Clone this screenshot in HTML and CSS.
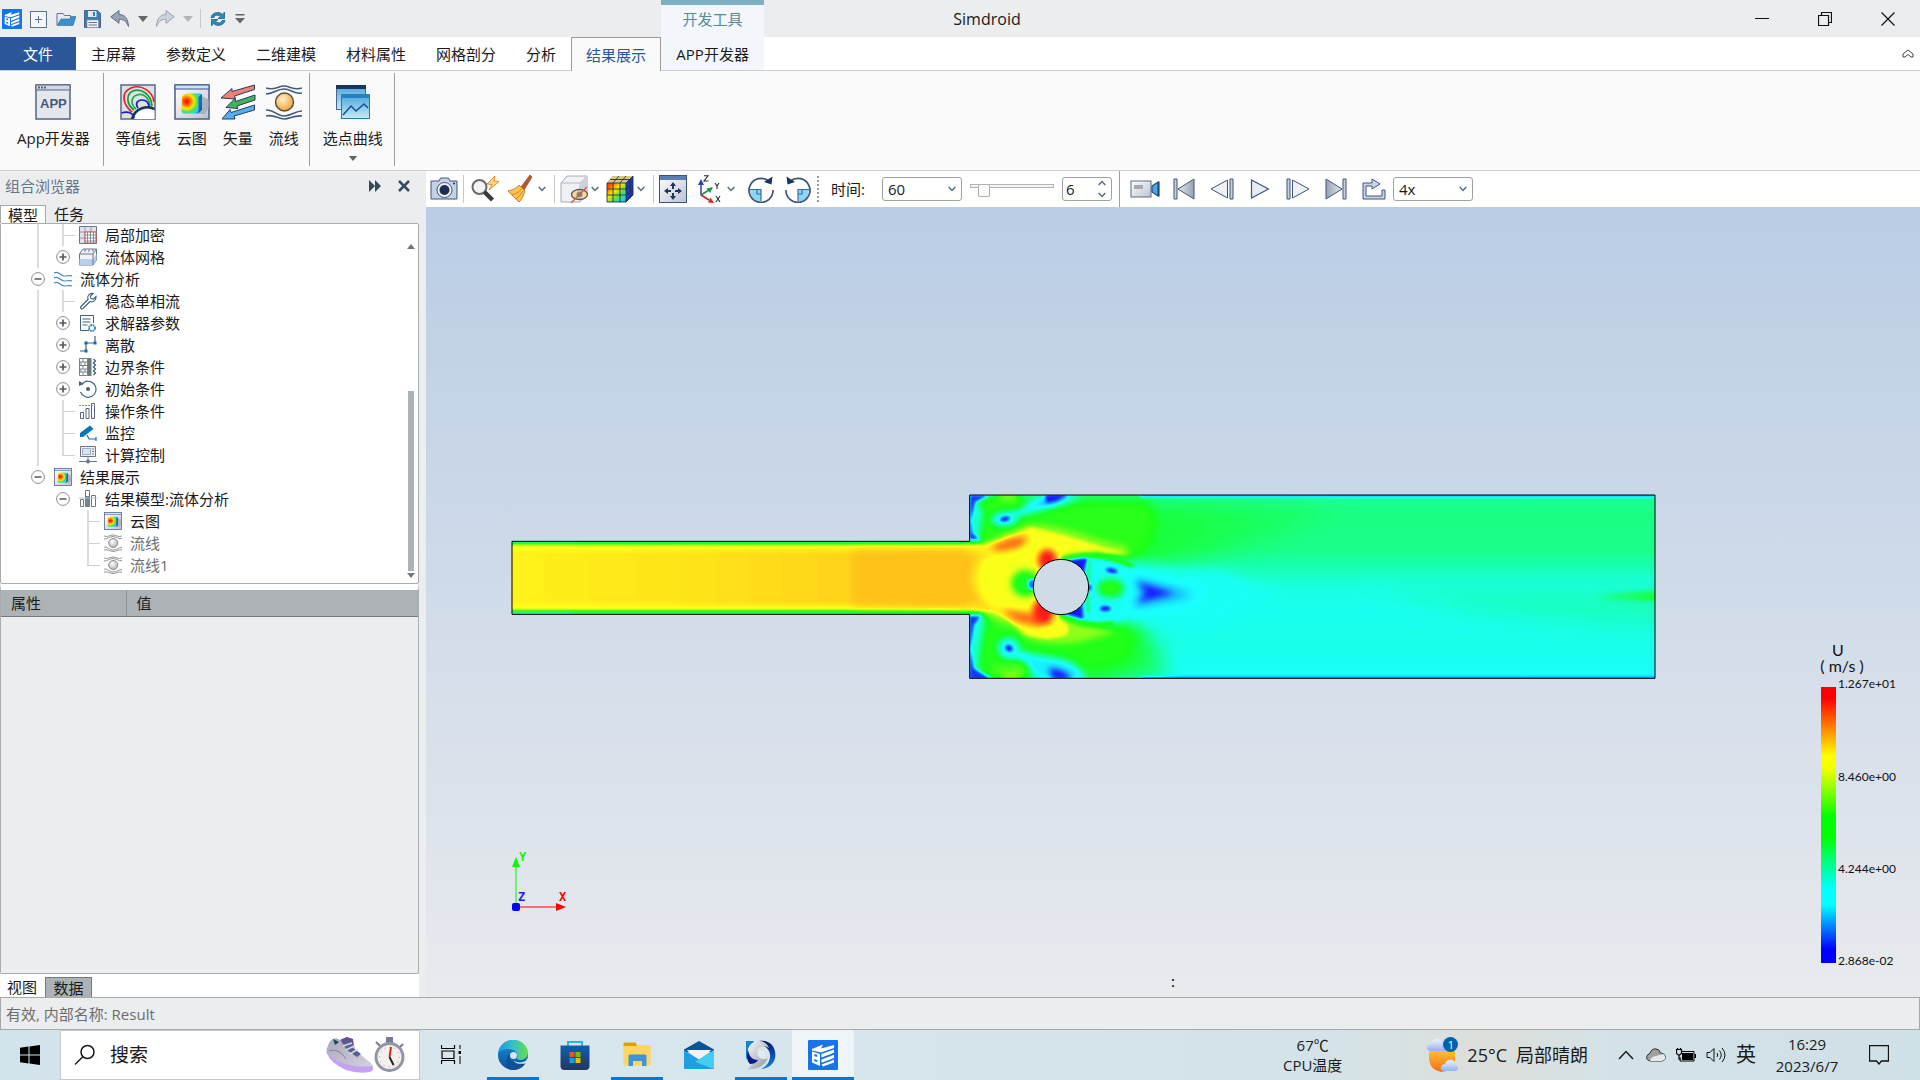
FILE: index.html
```html
<!DOCTYPE html>
<html lang="zh-CN">
<head>
<meta charset="utf-8">
<title>Simdroid</title>
<link rel="stylesheet" href="styles.css">
</head>
<body>
<svg class="sprite" aria-hidden="true">
  <defs>
    <linearGradient id="g-rainbow" x1="0" y1="0" x2="1" y2="1"><stop offset="0" stop-color="#f00000"/><stop offset=".25" stop-color="#ff5a00"/><stop offset=".42" stop-color="#ffe600"/><stop offset=".6" stop-color="#5ee04a"/><stop offset=".78" stop-color="#1fd0f0"/><stop offset="1" stop-color="#1230c8"/></linearGradient>
    <radialGradient id="g-heat" cx=".25" cy=".4" r=".85"><stop offset="0" stop-color="#e80000"/><stop offset=".2" stop-color="#ff5a00"/><stop offset=".42" stop-color="#ffe600"/><stop offset=".62" stop-color="#4be060"/><stop offset=".82" stop-color="#20d8f0"/><stop offset="1" stop-color="#1060e0"/></radialGradient>
    <linearGradient id="g-steel" x1="0" y1="0" x2="1" y2="1"><stop offset="0" stop-color="#fff"/><stop offset="1" stop-color="#bcc4d2"/></linearGradient>
    <linearGradient id="g-grey" x1="0" y1="0" x2="1" y2="0"><stop offset="0" stop-color="#e4e8ee"/><stop offset="1" stop-color="#98a2b2"/></linearGradient>
    <linearGradient id="g-sky" x1="0" y1="0" x2="0" y2="1"><stop offset="0" stop-color="#4ca4dc"/><stop offset="1" stop-color="#c2ecfc"/></linearGradient>
    <radialGradient id="g-ball" cx=".4" cy=".35" r=".7"><stop offset="0" stop-color="#fff0c8"/><stop offset="1" stop-color="#f0a030"/></radialGradient>
    <radialGradient id="g-ballgrey" cx=".4" cy=".35" r=".7"><stop offset="0" stop-color="#fff"/><stop offset="1" stop-color="#b0b0b0"/></radialGradient>
    <linearGradient id="g-edge" x1="0" y1="0" x2="1" y2="0"><stop offset="0" stop-color="#1a9be0"/><stop offset=".5" stop-color="#35c0c8"/><stop offset="1" stop-color="#66e048"/></linearGradient>
    <linearGradient id="g-edge2" x1="0" y1="0" x2="0" y2="1"><stop offset="0" stop-color="#1c8edc"/><stop offset="1" stop-color="#0c4f98"/></linearGradient>
    <linearGradient id="g-store" x1="0" y1="0" x2="0" y2="1"><stop offset="0" stop-color="#0f5fae"/><stop offset="1" stop-color="#23365e"/></linearGradient>
    <linearGradient id="g-swirl" x1="0" y1="0" x2="1" y2="1"><stop offset="0" stop-color="#fafcff"/><stop offset="1" stop-color="#8a929c"/></linearGradient>
    <linearGradient id="g-swirl2" x1="0" y1="0" x2="0" y2="1"><stop offset="0" stop-color="#08106a"/><stop offset="1" stop-color="#0c8ae8"/></linearGradient>
    <linearGradient id="g-shoe" x1="0" y1="0" x2="1" y2="1"><stop offset="0" stop-color="#a9a6bc"/><stop offset="1" stop-color="#d9d5e2"/></linearGradient>
    <linearGradient id="g-sun" x1="0" y1="0" x2="0" y2="1"><stop offset="0" stop-color="#ffc02e"/><stop offset="1" stop-color="#f26b1c"/></linearGradient>
    <linearGradient id="g-cloud" x1="0" y1="0" x2="0" y2="1"><stop offset="0" stop-color="#eef4ff"/><stop offset="1" stop-color="#8fb2ee"/></linearGradient>
  </defs>
  <symbol id="i-logo" viewBox="0 0 30 30"><rect width="30" height="30" rx="1" fill="#1673e8"/><path d="M4 9 15 4.500l-2 4 13-3.500v3l-13 4.500L4 10.500z" fill="#fff"/><path d="M4 11.500l8 2.500v12L4 22.500zM6.300 14v2.300l3 .8v-2.300zm0 5v2.300l3 .8v-2.200z" fill="#fff" fill-rule="evenodd"/><path d="M13.500 14 26 9.500v3.300L13.500 17.500zM13.500 19.500 26 14.800V18l-12.500 4.800zM13.500 24.500 26 19.800v2.700L15 26.500z" fill="#fff"/></symbol>
  <symbol id="i-new" viewBox="0 0 20 20"><rect x="1.500" y="2.500" width="16" height="16" fill="#f5f7fa" stroke="#60708f"/><path d="M9.500 7v7M6 10.500h7" stroke="#60708f"/></symbol>
  <symbol id="i-open" viewBox="0 0 20 20"><path d="M1 16V4.500h6l1.500 2h6V9" fill="#e7eaf0" stroke="#60708f"/><path d="M1 16.500 5 10h9l1.500-2.500H20l-3 9z" fill="#3b8fcc" stroke="#2e6a9d" stroke-width=".6"/></symbol>
  <symbol id="i-save" viewBox="0 0 20 20"><path d="M1.500 1.500h13l3 3v14h-16z" fill="#377fb8" stroke="#4a6284"/><path d="M5 2h8.500v6H5z" fill="#dfe8f2"/><path d="M10 3h2v4h-2z" fill="#377fb8"/><path d="M4 11h11.500v7.500H4z" fill="#f4f6f9" stroke="#7d8aa0" stroke-width=".6"/><path d="M5.500 13.500h8.500M5.500 16h8.500" stroke="#60708f"/></symbol>
  <symbol id="i-undo" viewBox="0 0 20 20"><path d="M.8 7.800 9 1.500v4c6 .2 9 4 9.500 12C16 11.500 13 10.300 9 10.300v4z" fill="#98a4b6" stroke="#5d6d88"/></symbol>
  <symbol id="i-redo" viewBox="0 0 20 20"><path d="M19.200 7.800 11 1.500v4c-6 .2-9 4-9.500 12C4 11.500 7 10.300 11 10.300v4z" fill="#cdd3da" stroke="#9ba3af"/></symbol>
  <symbol id="i-sync" viewBox="0 0 20 20"><path d="M3 8.500C4 3.500 11 2 14.500 5.500L16.500 3v6.500H10l2.500-2.200C9.500 5.500 6.500 6 6 8.500zM17 11.500c-1 5-8 6.500-11.500 3L3.500 17v-6.500H10l-2.500 2.200c3 1.800 6 1.300 6.500-1.200z" fill="#2c8cb4" stroke="#1f5f86" stroke-width=".8"/></symbol>
  <symbol id="i-caret" viewBox="0 0 10 6"><path d="M0 0h10L5 6z" fill="currentColor"/></symbol>
  <symbol id="i-custom" viewBox="0 0 10 10"><path d="M.5 0h9v1.500h-9zM0 4h10L5 9.500z" fill="currentColor"/></symbol>
  <symbol id="i-chev" viewBox="0 0 8 6"><path d="M.7 1 4 4.500 7.300 1" fill="none" stroke="#54707c" stroke-width="1.500"/></symbol>
  <symbol id="i-plus" viewBox="0 0 14 14"><circle cx="7" cy="7" r="6.400" fill="#fff" stroke="#8c8c94"/><path d="M7 3.500v7M3.500 7h7" stroke="#555a60" stroke-width="1.700"/></symbol>
  <symbol id="i-minus" viewBox="0 0 14 14"><circle cx="7" cy="7" r="6.400" fill="#fff" stroke="#8c8c94"/><path d="M3.500 7h7" stroke="#555a60" stroke-width="1.500"/></symbol>

  <symbol id="i-app" viewBox="0 0 36 36"><rect x="1" y="1" width="34" height="34" fill="#e4e8ee" stroke="#55637e" stroke-width="1.500"/><path d="M1 1h34v5H1z" fill="#d1d9e6" stroke="#55637e"/><path d="M3 3.500h8" stroke="#55637e" stroke-width="2" stroke-dasharray="2 1"/></symbol>
  <symbol id="i-contour" viewBox="0 0 36 36"><rect x="1" y="1" width="34" height="34" fill="#dde1e8" stroke="#586888" stroke-width="1.500"/><g fill="none" stroke-width="1.700"><path d="M12 28C2 20 1 8 11 4s22 3 23 14" stroke="#e82020"/><path d="M14 26C6 20 6 10 13 7s18 2 19 15" stroke="#1a9a3a"/><path d="M16 25c-6-5-5-12 1-14s13 2 13 13" stroke="#1fb045"/><path d="M18 24c-3-4-1-8 4-8s7 3 7 8M1.500 29c8-3 13 2 13 6" stroke="#1a20c8"/></g><path d="M14 35c3-9 13-12 20.500-8v8z" fill="#fff"/><path d="M12 35c3-11 15-14 22.500-10" fill="none" stroke="#1c2f55" stroke-width="2.500"/></symbol>
  <symbol id="i-cloudmap" viewBox="0 0 36 36"><rect x="1" y="1" width="34" height="34" fill="url(#g-steel)" stroke="#4a5c80" stroke-width="1.500"/><path d="M1 1h34v4H1z" fill="#cfe4f8" stroke="#3a5388"/><path d="M28 12v14l-3 4h6l4-7V16z" fill="#9aa4b6" opacity=".7"/><path d="M8 13q1-3 4-3.500h13q3 0 3 3v13l-4 4H10q-2.500 0-2.500-3z" fill="url(#g-heat)"/><path d="m24.500 13 3.500-3v16l-3.500 3.500z" fill="#1848a8" opacity=".75"/></symbol>
  <symbol id="i-vector" viewBox="0 0 36 36"><g stroke-linejoin="round"><path d="M1 14 12 4.500v3L34.500 1v4.500L14.500 12l1 3z" fill="#ee8078" stroke="#2b3c5e"/><path d="M6 23.500 15 14.500l.5 3L35 11v5l-18 6 1 2.500z" fill="#3fb458" stroke="#2b3c5e"/><path d="M2 35l8-9.500 1 3L34.500 21v5L14 32l1 3z" fill="#52b0f0" stroke="#2b3c5e"/></g></symbol>
  <symbol id="i-stream" viewBox="0 0 36 36"><g fill="none" stroke="#45597c" stroke-width="1.600"><path d="M0 4c8 3 12-2 18-2s10 5 18 2M0 10c7 0 11-5 18-5s11 6 18 4M0 26c7-1 11 6 18 6s11-5 18-5M0 32c8-2 12 3 18 3s10-4 18-3"/></g><circle cx="18.500" cy="18" r="9" fill="url(#g-ball)" stroke="#5a4a38" stroke-width="1.400"/></symbol>
  <symbol id="i-streamgrey" viewBox="0 0 36 36"><g fill="none" stroke="#969696" stroke-width="2"><path d="M0 4c8 3 12-2 18-2s10 5 18 2M0 10c7 0 11-5 18-5s11 6 18 4M0 26c7-1 11 6 18 6s11-5 18-5M0 32c8-2 12 3 18 3s10-4 18-3"/></g><circle cx="18.500" cy="18" r="9" fill="url(#g-ballgrey)" stroke="#888" stroke-width="2"/></symbol>
  <symbol id="i-curve" viewBox="0 0 36 36"><rect x="1.500" y="1.500" width="29" height="24" fill="url(#g-sky)" stroke="#47658c"/><path d="M1 1h30v4H1z" fill="#1c3460"/><rect x="6.500" y="10.500" width="28" height="24" fill="url(#g-sky)" stroke="#1f78b4"/><path d="M6 10h29v4H6z" fill="#2482c0"/><path d="m8 31 8-9 5 5 8-7 4 4" fill="none" stroke="#1c4c88" stroke-width="1.500"/></symbol>

  <symbol id="i-camera" viewBox="0 0 28 28"><path d="M1 6h8l1.500-3h8L20 6h7v18H1z" fill="#c3d2e6" stroke="#415577"/><circle cx="14.500" cy="15" r="7.500" fill="#eef3fa" stroke="#415577"/><circle cx="14.500" cy="15" r="5" fill="#1c2f52"/><circle cx="24" cy="8.500" r="1" fill="#1c2f52"/></symbol>
  <symbol id="i-magnify" viewBox="0 0 28 28"><circle cx="8.500" cy="12" r="7" fill="#f4f4f6" stroke="#6a6a6a" stroke-width="2"/><path d="m13.500 17 8 8" stroke="#3b3b3b" stroke-width="4.500"/><path d="M24 1 16 9l5 .5-3 5.500 10-8.500-5-.5z" fill="#ffd680" stroke="#e88a28"/></symbol>
  <symbol id="i-broom" viewBox="0 0 28 28"><path d="M23 0 14 12l3 3L25 2z" fill="#b8582a" stroke="#7d3515" stroke-width=".6"/><path d="M12 10c-3 4-7 5-11 6l11 11c3-2 4-6 6-11z" fill="#f8c44e" stroke="#cf7e28"/><path d="M14 14C12 18 8 19 5 19.500M16 16c-2 3-4 6-7.500 8" fill="none" stroke="#d88a28"/></symbol>
  <symbol id="i-hide" viewBox="0 0 28 28"><path d="M1 8 7 1h20v18l-7 8H1z" fill="#eff1f4" stroke="#a4abb4"/><path d="M1 8h19v19M20 8l7-7" fill="none" stroke="#b4bbc4"/><path d="M20 8l7-7v18l-7 8z" fill="#cfd4da"/><ellipse cx="19.500" cy="19.500" rx="8" ry="5" fill="#f7d894" stroke="#58526a" stroke-width="1.300"/><circle cx="19.500" cy="19.500" r="3" fill="#8a8a90"/><path d="M11 28 27 12" stroke="#c85838" stroke-width="1.200"/></symbol>
  <symbol id="i-cube" viewBox="0 0 28 28"><path d="M1 8 7 1h20v19l-7 7H1z" fill="url(#g-rainbow)"/><path d="M1 8 7 1h20l-7 7z" fill="#d8c884"/><path d="M20 8l7-7v19l-7 7z" fill="#1b38c0"/><path d="M1 8h19v19H1zM7 8v19M14 8v19M1 14h19l7-6M1 20h19l7-6M7 8l6-7M14 8l6-7M4 4.500h20v19M20 8l7-7v19l-7 7" fill="none" stroke="#27313c" stroke-width=".9"/></symbol>
  <symbol id="i-fit" viewBox="0 0 28 28"><rect x=".5" y=".5" width="27" height="27" fill="url(#g-steel)" stroke="#3c5276"/><path d="M1 1h26v4H1z" fill="#5a7fb4"/><path d="M14 7l3 4h-2v3h-2v-3h-2zM14 25l3-4h-2v-3h-2v3h-2zM5 16l4-3v2h3v2H9v2zM23 16l-4-3v2h-3v2h3v2z" fill="#1c3460"/></symbol>
  <symbol id="i-axes" viewBox="0 0 28 28"><path d="M5 20V9" stroke="#2448a8" stroke-width="1.500"/><path d="m5 4 3 6H2z" fill="#2448a8"/><path d="m5 20 8-5" stroke="#1f9248" stroke-width="1.500"/><path d="m17 12-3 6-3.500-4.500z" fill="#1f9248"/><path d="m5 20 8 5" stroke="#e82020" stroke-width="2"/><path d="m18 28-6-.5 2.500-5z" fill="#e82020"/><g fill="none" stroke="#2a2a2a" stroke-width="1.100"><path d="M8 .8h4L8 6h4.500M19 8l2 3 2-3M21 11v3M20 21l4 6M24 21l-4 6"/></g></symbol>
  <symbol id="i-rotate" viewBox="0 0 28 28"><path d="M3 15h11v11.500C8 26.500 3.500 22 3 15z" fill="#8cd6f8"/><path d="M14 26V14.500H3M10 15v4h4" fill="none" stroke="#3a6ea0" stroke-width="1.200"/><path d="M21.500 6A12 12 0 1 0 26 15" fill="none" stroke="#3e5474" stroke-width="1.700"/><path d="m25.500 1.500-1 8L17 7z" fill="#1c3460"/></symbol>
  <symbol id="i-video" viewBox="0 0 32 22"><rect x="1" y="3" width="20" height="16" fill="url(#g-steel)" stroke="#5c6c86"/><path d="M4 7h9v4H4z" fill="#a6a9ae"/><path d="M22 8l6-4v14l-6-4zM29 3.500v15" fill="#4aa8e0" stroke="#234a7c" stroke-width="1.200"/></symbol>
  <symbol id="i-first" viewBox="0 0 24 22"><path d="M2 1h3v20H2z" fill="#c8d0dc" stroke="#405478"/><path d="M22 1v20L6 11z" fill="url(#g-grey)" stroke="#405478"/></symbol>
  <symbol id="i-back" viewBox="0 0 24 22"><path d="M20 1h3v20h-3z" fill="#c8d0dc" stroke="#405478"/><path d="M17.500 2v18L1 11z" fill="#eef0f4" stroke="#405478"/></symbol>
  <symbol id="i-play" viewBox="0 0 24 22"><path d="M3.500 2v18L20.500 11z" fill="#e8ecf2" stroke="#405478" stroke-width="1.200"/></symbol>
  <symbol id="i-export" viewBox="0 0 24 22"><path d="M10 5V1l8 5-8 5V8H4v10h16v-6h3v9H1V5z" fill="#c9d5e6" stroke="#405478"/></symbol>

  <symbol id="t-refine" viewBox="0 0 18 18"><path d="M.5.500h17v17H.5z" fill="#dfe2ea" stroke="#6c7690"/><path d="M6 0v18M0 6h18M12 0v18M0 12h18" stroke="#8089a0" stroke-width=".8"/><path d="M6 6h11v11H6z" fill="#fff" stroke="#c85a40"/><path d="M8.500 6v11M11.500 6v11M14.500 6v11M6 9h11M6 12h11M6 15h11" stroke="#707890" stroke-width=".8"/></symbol>
  <symbol id="t-mesh" viewBox="0 0 18 18"><path d="M.5 6 4 1h13.500v11L14 17H.5z" fill="#f0f3f8" stroke="#6a7690"/><path d="M.5 11H14l3.500-5v6L14 17H.5z" fill="#b8d0f0"/><path d="M.5 6H14v11M14 6l3.500-5M6 4V1M10 4V1M14 4V1" fill="none" stroke="#6a7690"/></symbol>
  <symbol id="t-waves" viewBox="0 0 18 18"><path d="M0 3c5-3 6 3 10 3s5-1 8 0M0 8c5-3 6 3 10 3s5-1 8 0M0 13c5-3 6 3 10 3s5-1 8 0" fill="none" stroke="#4a8cb8" stroke-width="1.200"/></symbol>
  <symbol id="t-wrench" viewBox="0 0 18 18"><path d="M2 16.500c-1-1 0-2 0-2L9 7.500C8 4 10 1 14 1.500L11.500 4l.5 2.500 2.500.5L17 4.500c.5 4-3 6-6 5l-7 7c-1 .5-1.500.5-2 0z" fill="#fff" stroke="#3f6478" stroke-width="1.200"/></symbol>
  <symbol id="t-params" viewBox="0 0 18 18"><path d="M10 16.500H1.500v-15h13V9" fill="none" stroke="#3f6478"/><path d="M3.500 5h8M3.500 8h8M3.500 11h5" stroke="#3f6478"/><circle cx="13" cy="14" r="3" fill="#fff" stroke="#2a88c0" stroke-width="1.800" stroke-dasharray="1.800 .6"/></symbol>
  <symbol id="t-discrete" viewBox="0 0 18 18"><path d="M1 15h6V7h9V0" fill="none" stroke="#3f6478" stroke-width="1.200"/><path d="M5.500 13.500h3v3h-3zM5.500 5.500h3v3h-3zM14.500 5.500h3v3h-3z" fill="#0a6eb4"/></symbol>
  <symbol id="t-bound" viewBox="0 0 18 18"><path d="M.5.500h8v17h-8zM0 4h8M0 7.500h8M0 11h8M0 14h8M4 0v4M2 4v3.500M6 4v3.500M4 7.500V11M2 11v3M6 11v3M4 14v3" fill="none" stroke="#6c7880" stroke-width=".9"/><path d="M8.500 0h4v18h-4z" fill="#6c7880"/><path d="M14.500 1l2 2-2 2 2 2-2 2 2 2-2 2 2 2-2 2" fill="none" stroke="#3f6478" stroke-width="1.300"/></symbol>
  <symbol id="t-init" viewBox="0 0 18 18"><path d="M3 4a8 8 0 1 1-1.500 8M6 1.500A8 8 0 0 1 9 1" fill="none" stroke="#3f6478" stroke-width="1.200"/><path d="M0 6V1l5 3z" fill="#3f6478"/><circle cx="9" cy="9" r="2" fill="#3f6478"/></symbol>
  <symbol id="t-ops" viewBox="0 0 18 18"><path d="M1.500 10.500h3v6h-3zM7 6.500h3v10H7zM12.500 1.500h3v15h-3z" fill="#fff" stroke="#5a6482"/><path d="M0 3.500h16" stroke="#d8785c" stroke-dasharray="2 1"/></symbol>
  <symbol id="t-monitor" viewBox="0 0 18 18"><path d="M1 9 11 1.500 14.500 5 4 13H1z" fill="#0a74b8"/><path d="M8 11l2 4h7v2M17 13v4" fill="none" stroke="#0a74b8" stroke-width="1.200"/></symbol>
  <symbol id="t-calc" viewBox="0 0 18 18"><path d="M1.500.500h15v10h-15z" fill="#eef0f4" stroke="#6a7690"/><path d="M3.500 2.500h8v6h-8z" fill="#d5e6f8" stroke="#8a94a8" stroke-width=".7"/><path d="M13 3h2M13 5.500h2M13 8h2" stroke="#6a7690"/><path d="M9 11v4M0 15.500h18" stroke="#6a7690"/><circle cx="9" cy="15.500" r="2" fill="#6a7690"/></symbol>
  <symbol id="t-bars" viewBox="0 0 18 18"><path d="M1.500 9.500h3v7h-3zM12.500 5.500h4v11h-4z" fill="#fff" stroke="#6c7880"/><path d="M6.500.500h4v16h-4z" fill="#fff" stroke="#6c7880"/><path d="M6.500 6h4v10.500h-4z" fill="#77838c"/><path d="M0 8h18" stroke="#a8c8d8"/></symbol>

  <symbol id="k-win" viewBox="0 0 20 20"><path d="M0 2.800 8.500 1.600V9.600H0zM9.500 1.500 20 0v9.600H9.500zM0 10.500h8.500v8L0 17.300zM9.500 10.500H20V20L9.500 18.600z" fill="#000"/></symbol>
  <symbol id="k-search" viewBox="0 0 22 22"><circle cx="13.500" cy="8" r="6.500" fill="none" stroke="#1a1a1a" stroke-width="1.500"/><path d="M9 12.500 1 20.500" stroke="#1a1a1a" stroke-width="1.500"/></symbol>
  <symbol id="k-task" viewBox="0 0 20 20"><path d="M.5 0v3.500h13V0M.5 19v-3.500h13V19M1 6h12v7.500H1z" fill="none" stroke="#000" stroke-width="1.200"/><path d="M19 0v4M19 11v8" stroke="#000"/><path d="M17.500 6h3v3h-3z" fill="#000"/></symbol>
  <symbol id="k-edge" viewBox="0 0 30 30"><circle cx="15" cy="15" r="15" fill="url(#g-edge2)"/><path d="M.2 13.500C1 5 7.500 0 15 0c9 0 15 6.500 15 12.500 0 5-4 7.500-7.500 7.500-3 0-4-1-3.500-2.200 1.500-3-.5-7.300-5.500-8.300C7 8.300 2 10 .2 13.500z" fill="url(#g-edge)"/><path d="M12 14c-1 7 4 12 11 10 2-.5 3.500-1.500 5-2C25 28 19 31 13 29.700 7 27 7 18 12 14z" fill="#124f96"/><path d="M30 18v5c-4 1-12 2-14.500-2.500 3 2.500 9 2.500 12 .5z" fill="#d6e5ec"/><circle cx="15.500" cy="15.500" r="3.500" fill="#d6e5ec"/></symbol>
  <symbol id="k-store" viewBox="0 0 30 30"><path d="M8 6V2h14v4" fill="none" stroke="#2cb2f0" stroke-width="2"/><path d="M.5 5.500h29V26q0 4-4 4h-21q-4 0-4-4z" fill="url(#g-store)"/><path d="M9.500 12h5v5h-5z" fill="#f25022"/><path d="M15.500 12h5v5h-5z" fill="#7fba00"/><path d="M9.500 18h5v5h-5z" fill="#00a4ef"/><path d="M15.500 18h5v5h-5z" fill="#ffb900"/></symbol>
  <symbol id="k-folder" viewBox="0 0 30 30"><path d="M1.500 3.500q0-1 1-1h11l2 4h-14z" fill="#dfa000"/><path d="M1.500 6h13l2-1h12v20.500h-27z" fill="#ffd461"/><path d="M6.500 26V16q0-1.500 1.500-1.500h15q1.500 0 1.500 1.500v10H20v-5h-9v5z" fill="#3c94d8"/></symbol>
  <symbol id="k-mail" viewBox="0 0 30 30"><path d="M0 9.500 15 1l15 8.500V12H0z" fill="#0c529a"/><path d="M3 10h24L15 22z" fill="#f2f2f2"/><path d="M0 10l15 9.500L30 10v19H0z" fill="#1e9fe0"/><path d="M30 10 11 22l19 7z" fill="#42cdf4"/><path d="M3 10h24L15 19z" fill="#f2f2f2"/></symbol>
  <symbol id="k-swirl" viewBox="0 0 30 30"><path d="M0 1h8L3 12 0 20z" fill="#1182d8"/><path d="M13 1c12-2 18 8 16 17-1 6-7 11-14 11 8-4 11-12 8-18-2-4-6-6-10-5z" fill="url(#g-swirl2)"/><path d="M2 9C4 3 9 1 13 1c5 0 9 3 10 7-5-3-11-1-12 4 0 6 6 9 11 6-4 9-12 12-21 11 6-3 6-8 4-11C4 15 1 13 2 9z" fill="url(#g-swirl)"/><path d="M2 10c1 7 5 10 10 10-2 3-5 4-8 4-3-3-4-8-2-14z" fill="#0a1a88"/><circle cx="15.500" cy="14" r="3.500" fill="#e4ebf0"/></symbol>
  <symbol id="k-shoe" viewBox="0 0 48 36"><path d="M4 4Q9-1 14 3l6-3 6 2 4 12 16 13q3 5-2 7-20 3-33-8L1 17q-2-3 3-13z" fill="url(#g-shoe)"/><path d="M1 16q15 16 45 13 3 4-2 6-12 2-24-2Q4 26 1 16z" fill="#c6a0f4"/><path d="M14 3l7-3 6 2 1 8z" fill="#6c4a9c"/><path d="M15 4l6 9 10 7 4-3-8-6-3-8z" fill="#55608c"/><path d="m17 9 9-3M20 13l8-4M24 17l8-5" stroke="#d8d8e8" stroke-width="1.500"/><path d="M7 2l6 3-4 3z" fill="#1c4a54"/><path d="M3 14c6-2 12 0 17 8" fill="none" stroke="#85829c"/></symbol>
  <symbol id="k-watch" viewBox="0 0 32 36"><path d="M13 1h5v5h-5zM2 5l4 4M29 7l-4 4" fill="#777a90" stroke="#777a90" stroke-width="2"/><circle cx="15.500" cy="20" r="15" fill="#9294a8"/><circle cx="15.500" cy="20" r="12" fill="#f3f0ee"/><circle cx="15.500" cy="20" r="10" fill="none" stroke="#999" stroke-dasharray="1 4.200"/><path d="M15.500 20 17 10" stroke="#e02a20" stroke-width="2"/><path d="m15.500 20 4 8" stroke="#222" stroke-width="2"/></symbol>
  <symbol id="k-weather" viewBox="0 0 32 36"><path d="M3 14h26v10Q25 35 15 35 4 33 3 22z" fill="url(#g-sun)"/><path d="M4 14q-4-1-3-4.500Q2 7 5 7q1-5 6-5 4 0 6 5 4 0 4 4t-4 3z" fill="url(#g-cloud)"/><path d="M17 34q-3-1-2-4 1-3 4-3 2-5 7-4 4 2 4 5 3 1 2 4-1 2-3 2z" fill="url(#g-cloud)"/></symbol>
  <symbol id="k-up" viewBox="0 0 16 10"><path d="m1 9 7-7.500L15 9" fill="none" stroke="#1a1a1a" stroke-width="1.500"/></symbol>
  <symbol id="k-cloud" viewBox="0 0 20 14"><path d="M5 13Q0 12.500.7 8.500 1.500 6 4 5.500 5 1 9.500.800q4 .2 5 4.200Q19 5.500 19.300 9q0 4-4.300 4z" fill="#a0a0a0" stroke="#2c2c2c"/><path d="M4 13q1-4.500 6-5L17 6q3 2 2 5-1.500 2-4 2z" fill="#e8e8e8"/></symbol>
  <symbol id="k-batt" viewBox="0 0 20 14"><path d="M5 3.500h13v9.500H4V9" fill="none" stroke="#000"/><path d="M6 5h11v7H6zM18.500 6h1.500v4h-1.500z" fill="#000"/><path d="M.5 1.500h5v4l-2.500 2-2.500-2zM1.500 0v2M4.500 0v2M3 7v4h2" fill="none" stroke="#000" stroke-width="1.200"/></symbol>
  <symbol id="k-vol" viewBox="0 0 20 18"><path d="M1 6.500h3l4-4v13l-4-4H1z" fill="none" stroke="#111"/><path d="M11 7q1.500 2 0 4M13.500 4.500q3.500 4.500 0 9M16 2q6 7 0 14" fill="none" stroke="#111"/></symbol>
  <symbol id="k-note" viewBox="0 0 20 20"><path d="M.5.500h19v15.500h-7l-2.500 3-2.500-3h-7z" fill="none" stroke="#111" stroke-width="1.300"/></symbol>
</svg>

<header class="titlebar">
  <div class="quick">
    <svg class="i20" aria-hidden="true"><use href="#i-logo"/></svg>
    <button class="qbtn" aria-label="新建"><svg class="i20"><use href="#i-new"/></svg></button>
    <button class="qbtn" aria-label="打开"><svg class="i20"><use href="#i-open"/></svg></button>
    <button class="qbtn" aria-label="保存"><svg class="i20"><use href="#i-save"/></svg></button>
    <button class="qbtn" aria-label="撤销"><svg class="i20"><use href="#i-undo"/></svg><svg class="caret"><use href="#i-caret"/></svg></button>
    <button class="qbtn dim" aria-label="重做"><svg class="i20"><use href="#i-redo"/></svg><svg class="caret"><use href="#i-caret"/></svg></button>
    <span class="qsep"></span>
    <button class="qbtn" aria-label="刷新"><svg class="i20"><use href="#i-sync"/></svg></button>
    <button class="qbtn" aria-label="自定义"><svg class="i10"><use href="#i-custom"/></svg></button>
  </div>
  <div class="context-head">开发工具</div>
  <h1 class="app-title">Simdroid</h1>
  <div class="winbtns">
    <button aria-label="最小化"><svg viewBox="0 0 14 14"><path d="M0 6.500h14" stroke="#111"/></svg></button>
    <button aria-label="还原"><svg viewBox="0 0 14 14"><path d="M.5 3.500h10v10H.5zM3.500 3V.500h10v10H11" fill="none" stroke="#111" stroke-width="1.200"/></svg></button>
    <button aria-label="关闭"><svg viewBox="0 0 14 14"><path d="m.5.500 13 13M13.500.500l-13 13" stroke="#111" stroke-width="1.200"/></svg></button>
  </div>
</header>

<nav class="menu">
  <button class="file">文件</button>
  <button>主屏幕</button>
  <button>参数定义</button>
  <button>二维建模</button>
  <button>材料属性</button>
  <button>网格剖分</button>
  <button>分析</button>
  <button class="current">结果展示</button>
  <button class="context">APP开发器</button>
  <button class="collapse" aria-label="折叠功能区"><svg viewBox="0 0 12 12"><path d="M1 6l5-4 5 4v3H9L6 6.500 3 9H1z" fill="#fff" stroke="#444"/></svg></button>
</nav>

<section class="ribbon">
  <div class="rgroup rgroup-app">
    <button class="rbtn"><span class="app-icon"><svg class="i36"><use href="#i-app"/></svg><b>APP</b></span><span>App开发器</span></button>
  </div>
  <div class="rgroup rgroup-plots">
    <button class="rbtn"><svg class="i36"><use href="#i-contour"/></svg><span>等值线</span></button>
    <button class="rbtn"><svg class="i36"><use href="#i-cloudmap"/></svg><span>云图</span></button>
    <button class="rbtn"><svg class="i36"><use href="#i-vector"/></svg><span>矢量</span></button>
    <button class="rbtn"><svg class="i36"><use href="#i-stream"/></svg><span>流线</span></button>
  </div>
  <div class="rgroup rgroup-curve">
    <button class="rbtn"><svg class="i36"><use href="#i-curve"/></svg><span>选点曲线</span><svg class="drop"><use href="#i-caret"/></svg></button>
  </div>
</section>

<main class="work">
  <aside class="browser">
    <div class="dock-head">
      <span>组合浏览器</span>
      <button aria-label="自动隐藏"><svg viewBox="0 0 14 12"><path d="M1 0l6 6-6 6zM7 0l6 6-6 6z" fill="#34495e"/></svg></button>
      <button aria-label="关闭"><svg viewBox="0 0 14 12"><path d="M2 1l10 10M12 1 2 11" stroke="#34495e" stroke-width="2.500"/></svg></button>
    </div>
    <div class="dock-tabs"><button class="on">模型</button><button>任务</button></div>
    <div class="tree-box">
      <ul class="tree">
        <li><i class="c v"></i><i class="c t"></i><i class="c"><svg class="i18"><use href="#t-refine"/></svg></i><span>局部加密</span></li>
        <li><i class="c v"></i><button class="c" aria-label="展开"><svg class="i14"><use href="#i-plus"/></svg></button><i class="c"><svg class="i18"><use href="#t-mesh"/></svg></i><span>流体网格</span></li>
        <li><button class="c" aria-label="折叠"><svg class="i14"><use href="#i-minus"/></svg></button><i class="c"><svg class="i18"><use href="#t-waves"/></svg></i><span>流体分析</span></li>
        <li><i class="c v"></i><i class="c t"></i><i class="c"><svg class="i18"><use href="#t-wrench"/></svg></i><span>稳态单相流</span></li>
        <li><i class="c v"></i><button class="c" aria-label="展开"><svg class="i14"><use href="#i-plus"/></svg></button><i class="c"><svg class="i18"><use href="#t-params"/></svg></i><span>求解器参数</span></li>
        <li><i class="c v"></i><button class="c" aria-label="展开"><svg class="i14"><use href="#i-plus"/></svg></button><i class="c"><svg class="i18"><use href="#t-discrete"/></svg></i><span>离散</span></li>
        <li><i class="c v"></i><button class="c" aria-label="展开"><svg class="i14"><use href="#i-plus"/></svg></button><i class="c"><svg class="i18"><use href="#t-bound"/></svg></i><span>边界条件</span></li>
        <li><i class="c v"></i><button class="c" aria-label="展开"><svg class="i14"><use href="#i-plus"/></svg></button><i class="c"><svg class="i18"><use href="#t-init"/></svg></i><span>初始条件</span></li>
        <li><i class="c v"></i><i class="c t"></i><i class="c"><svg class="i18"><use href="#t-ops"/></svg></i><span>操作条件</span></li>
        <li><i class="c v"></i><i class="c t"></i><i class="c"><svg class="i18"><use href="#t-monitor"/></svg></i><span>监控</span></li>
        <li><i class="c v"></i><i class="c l"></i><i class="c"><svg class="i18"><use href="#t-calc"/></svg></i><span>计算控制</span></li>
        <li><button class="c" aria-label="折叠"><svg class="i14"><use href="#i-minus"/></svg></button><i class="c"><svg class="i18"><use href="#i-cloudmap"/></svg></i><span>结果展示</span></li>
        <li><i class="c"></i><button class="c" aria-label="折叠"><svg class="i14"><use href="#i-minus"/></svg></button><i class="c"><svg class="i18"><use href="#t-bars"/></svg></i><span>结果模型:流体分析</span></li>
        <li><i class="c"></i><i class="c"></i><i class="c t"></i><i class="c"><svg class="i18"><use href="#i-cloudmap"/></svg></i><span>云图</span></li>
        <li class="off"><i class="c"></i><i class="c"></i><i class="c t"></i><i class="c"><svg class="i18"><use href="#i-streamgrey"/></svg></i><span>流线</span></li>
        <li class="off"><i class="c"></i><i class="c"></i><i class="c l"></i><i class="c"><svg class="i18"><use href="#i-streamgrey"/></svg></i><span>流线1</span></li>
      </ul>
      <div class="scroll">
        <svg class="up"><use href="#i-caret"/></svg>
        <div class="thumb"></div>
        <svg><use href="#i-caret"/></svg>
      </div>
    </div>
    <div class="props">
      <table>
        <thead><tr><th scope="col" class="key">属性</th><th scope="col">值</th></tr></thead>
        <tbody></tbody>
      </table>
    </div>
    <div class="prop-tabs"><button>视图</button><button class="on">数据</button></div>
  </aside>

  <section class="view">
    <div class="toolbar">
      <div class="tgroup"><button class="tbtn" aria-label="截图"><svg class="i28"><use href="#i-camera"/></svg></button></div>
      <span class="tsep"></span>
      <div class="tgroup first">
        <button class="tbtn" aria-label="缩放"><svg class="i28"><use href="#i-magnify"/></svg></button>
        <button class="tbtn" aria-label="清除"><svg class="i28"><use href="#i-broom"/></svg><svg class="chev"><use href="#i-chev"/></svg></button>
      </div>
      <span class="tsep"></span>
      <div class="tgroup tight">
        <button class="tbtn" aria-label="隐藏"><svg class="i28"><use href="#i-hide"/></svg><svg class="chev"><use href="#i-chev"/></svg></button>
        <button class="tbtn" aria-label="显示模式"><svg class="i28"><use href="#i-cube"/></svg><svg class="chev"><use href="#i-chev"/></svg></button>
      </div>
      <span class="tsep"></span>
      <div class="tgroup">
        <button class="tbtn" aria-label="适应窗口"><svg class="i28"><use href="#i-fit"/></svg></button>
        <button class="tbtn" aria-label="视角"><svg class="i28"><use href="#i-axes"/></svg><svg class="chev"><use href="#i-chev"/></svg></button>
        <button class="tbtn" aria-label="顺时针旋转"><svg class="i28"><use href="#i-rotate"/></svg></button>
        <button class="tbtn flip" aria-label="逆时针旋转"><svg class="i28"><use href="#i-rotate"/></svg></button>
      </div>
      <span class="grip"></span>
      <div class="time">
        <label for="time">时间:</label>
        <span class="combo"><select id="time"><option>60</option></select><svg class="chev"><use href="#i-chev"/></svg></span>
        <input class="slider" type="range" min="0" max="60" value="6" aria-label="时间进度">
        <span class="spin"><input type="text" value="6" aria-label="时间步"><span class="arrows"><svg class="chev flipv"><use href="#i-chev"/></svg><svg class="chev"><use href="#i-chev"/></svg></span></span>
      </div>
      <span class="tsep full"></span>
      <div class="player">
        <button aria-label="录制"><svg class="vid"><use href="#i-video"/></svg></button>
        <button aria-label="第一帧"><svg><use href="#i-first"/></svg></button>
        <button aria-label="上一帧"><svg><use href="#i-back"/></svg></button>
        <button aria-label="播放"><svg><use href="#i-play"/></svg></button>
        <button class="flip" aria-label="下一帧"><svg><use href="#i-back"/></svg></button>
        <button class="flip" aria-label="最后一帧"><svg><use href="#i-first"/></svg></button>
        <button aria-label="导出"><svg><use href="#i-export"/></svg></button>
        <span class="combo"><select aria-label="播放速度"><option>4x</option></select><svg class="chev"><use href="#i-chev"/></svg></span>
      </div>
    </div>

    <div class="scene">
      <svg class="plot" viewBox="426 207 1494 790" preserveAspectRatio="xMidYMid meet" role="img" aria-label="速度云图">
        <defs>
          <filter id="cmap" x="-2%" y="-5%" width="104%" height="110%" color-interpolation-filters="sRGB">
            <feComponentTransfer>
              <feFuncR type="table" tableValues=".1 .1 .1 1 1"/>
              <feFuncG type="table" tableValues=".1 1 1 1 .1"/>
              <feFuncB type="table" tableValues="1 1 .1 .1 .1"/>
            </feComponentTransfer>
          </filter>
          <filter id="b3" x="-50%" y="-50%" width="200%" height="200%" color-interpolation-filters="sRGB"><feGaussianBlur stdDeviation="4"/></filter>
          <filter id="b8" x="-50%" y="-50%" width="200%" height="200%" color-interpolation-filters="sRGB"><feGaussianBlur stdDeviation="9"/></filter>
          <filter id="b15" x="-50%" y="-50%" width="200%" height="200%" color-interpolation-filters="sRGB"><feGaussianBlur stdDeviation="16"/></filter>
          <filter id="b30" x="-50%" y="-50%" width="200%" height="200%" color-interpolation-filters="sRGB"><feGaussianBlur stdDeviation="32"/></filter>
          <linearGradient id="inlet" x1="0" x2="1" y1="0" y2="0"><stop offset="0" stop-color="#c2c2c2"/><stop offset=".45" stop-color="#c7c7c7"/><stop offset="1" stop-color="#cfcfcf"/></linearGradient>
          <linearGradient id="outlet" x1="0" x2="0" y1="0" y2="1"><stop offset="0" stop-color="#5a5a5a"/><stop offset=".1" stop-color="#626262"/><stop offset=".3" stop-color="#606060"/><stop offset=".5" stop-color="#484848"/><stop offset=".62" stop-color="#444"/><stop offset=".8" stop-color="#464646"/><stop offset="1" stop-color="#404040"/></linearGradient>
          <linearGradient id="lobe" gradientUnits="userSpaceOnUse" x1="560" x2="1300" y1="0" y2="0"><stop offset="0" stop-color="#808080"/><stop offset="1" stop-color="#808080" stop-opacity="0"/></linearGradient>
          <linearGradient id="legend" x1="0" x2="0" y1="0" y2="1"><stop offset="0" stop-color="#f00"/><stop offset=".04" stop-color="#f00"/><stop offset=".25" stop-color="#ff0"/><stop offset=".3" stop-color="#f0ff00"/><stop offset=".47" stop-color="#0f0"/><stop offset=".54" stop-color="#0f0"/><stop offset=".73" stop-color="#0ff"/><stop offset=".79" stop-color="#0ff"/><stop offset=".95" stop-color="#00f"/><stop offset="1" stop-color="#00f"/></linearGradient>
          <clipPath id="domain"><path d="M-1284 184H89V45H2145V595H89V403H-1284z"/></clipPath>
        </defs>
        <svg x="940" y="480" width="360" height="210" viewBox="0 0 1080 630" overflow="visible">
          <g clip-path="url(#domain)">
            <g filter="url(#cmap)">
              <rect x="-1290" y="30" width="3450" height="580" fill="#444"/>
              <rect x="89" y="45" width="2060" height="550" fill="url(#outlet)"/>
              <path d="M1300 330H2200V440Q1700 430 1300 330z" fill="#525252" filter="url(#b30)"/>
              <path d="M1960 352 2200 330V365z" fill="#7c7c7c" filter="url(#b8)"/>
              <path d="M90 70H1300Q1000 190 680 250H500V400Q660 430 680 600H90z" fill="url(#lobe)" opacity=".8" filter="url(#b30)"/>
              <path d="M90 60H620Q680 130 610 220 590 245 540 255L400 220 90 190z" fill="#848484" filter="url(#b15)"/>
              <path d="M90 410 420 440 550 420Q620 470 570 540L480 590H90z" fill="#828282" filter="url(#b30)"/>
              <path d="M120 440 420 440 550 425Q600 470 560 520L480 550H130z" fill="#828282" filter="url(#b15)"/>
              <path d="M90 50H135L115 190H90zM90 405H135L105 600H90z" fill="#484848" filter="url(#b8)"/>
              <path d="M150 120Q240 90 290 50H430Q330 90 250 105L180 130z" fill="#3c3c3c" filter="url(#b8)"/>
              <path d="M190 490Q240 520 330 530T440 600H290L250 545 190 525z" fill="#3c3c3c" filter="url(#b8)"/>
              <ellipse cx="180" cy="72" rx="70" ry="18" fill="#848484" filter="url(#b8)"/>
              <ellipse cx="205" cy="50" rx="36" ry="10" fill="#a4a4a4" filter="url(#b8)"/>
              <ellipse cx="205" cy="572" rx="60" ry="26" fill="#8c8c8c" filter="url(#b8)"/>
              <ellipse cx="215" cy="590" rx="30" ry="14" fill="#a0a0a0" filter="url(#b8)"/>
              <ellipse cx="195" cy="117" rx="38" ry="20" fill="#404040" filter="url(#b8)"/>
              <ellipse cx="206" cy="503" rx="32" ry="30" fill="#404040" filter="url(#b8)"/>
              <path d="M90 45H150L106 66 94 120 98 160 126 186H88zM88 400H130L102 435 92 510 102 565 160 600H88z" fill="#080808" filter="url(#b3)"/>
              <ellipse cx="195" cy="117" rx="14" ry="7" transform="rotate(-12 195 117)" filter="url(#b3)"/>
              <ellipse cx="207" cy="505" rx="11" ry="9" transform="rotate(30 207 505)" filter="url(#b3)"/>
              <path d="M300 70Q330 45 400 40L350 62z" filter="url(#b8)"/>
              <path d="M315 45h70l-40 18-25 5z" filter="url(#b3)"/>
              <path d="M325 566Q365 560 400 600H340z" filter="url(#b8)"/>
              <path d="M345 575l45 20h-40z" filter="url(#b8)"/>
              <path d="M440 215Q620 270 860 275L1000 350 800 440Q560 410 440 430z" fill="#424242" filter="url(#b15)"/>
              <path d="M-1290 190H130Q200 165 260 135 330 130 420 160T560 200L570 235 380 235 350 320 360 400Q470 440 530 455L420 485Q330 500 250 470 220 440 200 410L130 392H-1290z" fill="#a0a0a0" filter="url(#b8)"/>
              <path d="M-1290 194H130Q200 180 270 140 340 155 420 180T555 218L380 232 350 320 360 410Q400 440 380 465 310 490 250 460 220 425 160 396L100 390H-1290z" fill="#bebebe" filter="url(#b3)"/>
              <rect x="-1400" y="208" width="1480" height="168" fill="url(#inlet)" filter="url(#b8)"/>
              <path d="M-260 212H140L200 180 270 160 240 200 130 225Q70 300 140 375L230 430H200L110 382-260 376z" fill="#d0d0d0" filter="url(#b15)"/>
              <path d="M150 205Q210 170 265 172L240 198 180 212z" fill="#ececec" filter="url(#b8)"/>
              <path d="M180 385Q250 400 310 400L340 425 290 440 230 425z" fill="#e8e8e8" filter="url(#b8)"/>
              <ellipse cx="322" cy="240" rx="28" ry="32" fill="#fff" filter="url(#b8)"/>
              <ellipse cx="310" cy="392" rx="32" ry="36" fill="#fff" filter="url(#b8)"/>
              <ellipse cx="185" cy="305" rx="34" ry="66" fill="#bebebe" filter="url(#b15)"/>
              <ellipse cx="256" cy="310" rx="42" ry="40" fill="#7c7c7c" filter="url(#b8)"/>
              <ellipse cx="277" cy="313" rx="14" ry="16" fill="#181818" filter="url(#b3)"/>
              <path d="M395 238 470 222 560 242 600 280 590 400 500 435 420 425 370 405 420 320z" fill="#424242" filter="url(#b8)"/>
              <path d="M365 236Q450 205 580 258" fill="none" stroke="#848484" stroke-width="14" filter="url(#b3)"/>
              <path d="M360 406Q430 445 520 430" fill="none" stroke="#848484" stroke-width="14" filter="url(#b3)"/>
              <path d="M450 240Q440 320 445 400" fill="none" stroke="#5c5c5c" stroke-width="14" filter="url(#b3)"/>
              <ellipse cx="512" cy="325" rx="40" ry="28" fill="#848484" filter="url(#b8)"/>
              <path d="M365 242 442 233 428 290zM360 398 426 372 430 418z" fill="#000" filter="url(#b3)"/>
              <ellipse cx="447" cy="323" rx="7" ry="10" filter="url(#b3)"/>
              <ellipse cx="515" cy="272" rx="18" ry="7" transform="rotate(12 515 272)" filter="url(#b3)"/>
              <ellipse cx="496" cy="386" rx="16" ry="8" filter="url(#b3)"/>
              <path d="M580 296 660 318 770 345 660 364 575 380 612 340z" fill="#202020" filter="url(#b15)"/>
              <path d="M590 306 660 328 700 340 650 352 590 368 620 338z" fill="#000" filter="url(#b8)"/>
              <path d="M-1100 186H0L120 184M-1100 400H0L120 402" fill="none" stroke="#808080" stroke-width="7" filter="url(#b3)"/>
              <path d="M600 45H2145M600 596H2145" stroke="#101010" stroke-width="9" filter="url(#b3)"/>
            </g>
          </g>
          <path d="M-1284 184H89V45H2145V595H89V403H-1284z" fill="none" stroke="#000" stroke-width="3"/>
          <circle cx="363" cy="321" r="83" fill="#d0dbe8" stroke="#000" stroke-width="3"/>
        </svg>
        <g class="triad">
          <path d="M516 907V865" stroke="#0f0"/><path d="m516 857 4 10h-8z" fill="#0f0"/>
          <path d="M516 907h42" stroke="#f00"/><path d="m566 907-10 4v-8z" fill="#f00"/>
          <rect x="512" y="903" width="8" height="8" rx="2" fill="#00f"/>
          <text x="519" y="861" fill="#0f0">Y</text><text x="518" y="901" fill="#22f">Z</text><text x="559" y="901" fill="#f00">X</text>
        </g>
        <g class="legend">
          <text class="unit" x="1838" y="656" text-anchor="middle">U</text>
          <text class="unit" x="1842" y="672" text-anchor="middle">( m/s )</text>
          <rect x="1821" y="687" width="15" height="276" fill="url(#legend)"/>
          <text x="1838" y="688">1.267e+01</text>
          <text x="1838" y="781">8.460e+00</text>
          <text x="1838" y="873">4.244e+00</text>
          <text x="1838" y="965">2.868e-02</text>
          <text class="unit" x="1171" y="987">:</text>
        </g>
      </svg>
    </div>
  </section>
</main>

<footer class="status">有效, 内部名称: Result</footer>

<div class="taskbar">
  <button class="start" aria-label="开始"><svg class="i20"><use href="#k-win"/></svg></button>
  <button class="search"><svg class="i22"><use href="#k-search"/></svg><span>搜索</span><svg class="shoe"><use href="#k-shoe"/></svg><svg class="watch"><use href="#k-watch"/></svg></button>
  <button class="app" aria-label="任务视图"><svg class="i20"><use href="#k-task"/></svg></button>
  <button class="app run" aria-label="Edge"><svg class="i30"><use href="#k-edge"/></svg></button>
  <button class="app" aria-label="应用商店"><svg class="i30"><use href="#k-store"/></svg></button>
  <button class="app run" aria-label="文件资源管理器"><svg class="i30"><use href="#k-folder"/></svg></button>
  <button class="app" aria-label="邮件"><svg class="i30"><use href="#k-mail"/></svg></button>
  <button class="app run" aria-label="应用"><svg class="i30"><use href="#k-swirl"/></svg></button>
  <button class="app run active" aria-label="Simdroid"><svg class="i30"><use href="#i-logo"/></svg></button>
  <div class="tray">
    <div class="two cpu"><span>67℃</span><span>CPU温度</span></div>
    <button class="weather"><span class="wicon"><svg><use href="#k-weather"/></svg><b>1</b></span><span>25°C</span><span>局部晴朗</span></button>
    <button class="tico" aria-label="显示隐藏的图标"><svg class="w16"><use href="#k-up"/></svg></button>
    <button class="tico" aria-label="OneDrive"><svg class="w20"><use href="#k-cloud"/></svg></button>
    <button class="tico" aria-label="电池"><svg class="w20"><use href="#k-batt"/></svg></button>
    <button class="tico" aria-label="音量"><svg class="w20"><use href="#k-vol"/></svg></button>
    <button class="tico ime">英</button>
    <button class="two clock"><span>16:29</span><span>2023/6/7</span></button>
    <button class="note" aria-label="通知"><svg class="i20"><use href="#k-note"/></svg></button>
  </div>
</div>
</body>
</html>
```

FILE: styles.css
```css
* { box-sizing: border-box; }
html, body { height: 100%; }
body {
  margin: 0;
  display: flex;
  flex-direction: column;
  overflow: hidden;
  background: #ecedef;
  color: #1a1a1a;
  font: 15px/20px "Open Sans", "Noto Sans CJK SC", sans-serif;
}
button { border: 0; padding: 0; background: none; color: inherit; font: inherit; }
svg { display: block; flex: none; }
.sprite { position: absolute; width: 0; height: 0; }
.i10 { width: 10px; height: 10px; }
.i14 { width: 14px; height: 14px; }
.i18 { width: 18px; height: 18px; }
.i20 { width: 20px; height: 20px; }
.i22 { width: 22px; height: 22px; }
.i28 { width: 28px; height: 28px; }
.i30 { width: 30px; height: 30px; }
.i36 { width: 36px; height: 36px; }
.flip svg { transform: scaleX(-1); }
.flipv { transform: scaleY(-1); }

/* title bar */
.titlebar { flex: none; display: flex; height: 37px; }
.quick { flex: none; width: 661px; display: flex; align-items: center; gap: 7px; padding-left: 2px; }
.qbtn { display: flex; align-items: center; gap: 8px; color: #666; }
.qbtn.dim { color: #b4b4b4; }
.caret { width: 10px; height: 6px; }
.qsep { width: 1px; height: 19px; background: #c8c8c8; }
.context-head {
  flex: none;
  width: 103px;
  padding-top: 4px;
  border-top: 5px solid #7db1c1;
  background: #f3f7fb;
  color: #56899a;
  text-align: center;
}
.app-title { flex: none; width: 446px; margin: 0 auto 0 0; font-size: 16px; font-weight: 400; line-height: 38px; text-align: center; }
.winbtns { display: flex; margin-right: 1px; }
.winbtns button { width: 63px; display: grid; place-items: center; }
.winbtns svg { width: 14px; height: 14px; }

/* menu */
.menu { flex: none; display: flex; height: 34px; background: #fff; border-bottom: 1px solid #cfcfcf; }
.menu button { padding: 0 15px; height: 33px; }
.menu .file { padding: 0 23px; background: #2b579a; color: #fff; }
.menu .current { height: 34px; padding: 0 14px; border: 1px solid #9a9a9a; border-bottom: 0; background: #fafafa; color: #2b579a; }
.menu .context { width: 103px; padding: 0; background: #f3f7fb; }
.menu .collapse { margin-left: auto; padding: 0 6px; }
.collapse svg { width: 12px; height: 12px; }

/* ribbon */
.ribbon { flex: none; display: flex; height: 100px; padding: 2px 0 4px; background: #fafafa; border-bottom: 1px solid #cfcfcf; }
.rgroup { display: flex; padding-top: 11px; border-right: 1px solid #a0a0a0; }
.rgroup-app { padding-left: 17px; padding-right: 13px; }
.rgroup-plots { padding-left: 12px; padding-right: 10px; gap: 16px; }
.rgroup-curve { padding-left: 13px; padding-right: 11px; }
.rbtn { display: flex; flex-direction: column; align-items: center; gap: 8px; align-self: flex-start; }
.rgroup-plots .rbtn:first-child { width: 45px; }
.rgroup-plots .rbtn { width: 30px; }
.drop { width: 10px; height: 5px; color: #666; }
.app-icon { display: grid; place-items: center; }
.app-icon > * { grid-area: 1 / 1; }
.app-icon b { padding-top: 4px; font: 700 13px/16px "Liberation Sans", sans-serif; color: #4a5878; }

/* main area */
.work { flex: 1; min-height: 0; display: flex; }
.browser { flex: none; width: 426px; display: flex; flex-direction: column; padding-right: 7px; }
.dock-head { flex: none; display: flex; align-items: center; gap: 15px; height: 34px; padding: 0 8px 4px 5px; color: #66768a; }
.dock-head span { flex: 1; }
.dock-head svg { width: 14px; height: 12px; }
.dock-tabs { flex: none; display: flex; height: 18px; }
.dock-tabs button { width: 46px; height: 18px; line-height: 18px; }
.dock-tabs .on { border: 1px solid #a8a8a8; border-bottom: 0; background: #fff; }
.tree-box { flex: 361 1 0; min-height: 0; display: flex; background: #fff; border: 1px solid #a9adb0; border-radius: 2px; }
.tree { flex: 1; margin: 0; padding: 0 0 0 24px; list-style: none; overflow: hidden; }
.tree li { display: flex; align-items: center; height: 22px; }
.tree .off { color: #6f6f6f; }
.tree span { padding-left: 5px; white-space: nowrap; }
.c { width: 25px; height: 22px; display: grid; place-items: center; background-repeat: no-repeat; }
.v { background-image: linear-gradient(#dcdcdc, #dcdcdc); background-size: 2px 100%; background-position: 12px 0; }
.t { background-image: linear-gradient(#dcdcdc, #dcdcdc), linear-gradient(#d0d0d0, #d0d0d0); background-size: 2px 100%, 13px 1px; background-position: 12px 0, 12px 11px; }
.l { background-image: linear-gradient(#dcdcdc, #dcdcdc), linear-gradient(#d0d0d0, #d0d0d0); background-size: 2px 11px, 13px 1px; background-position: 12px 0, 12px 11px; }
.scroll { flex: none; width: 14px; display: flex; flex-direction: column; align-items: center; padding: 20px 0 5px; color: #6a7a80; }
.scroll svg { width: 8px; height: 5px; }
.scroll .up { transform: scaleY(-1); }
.thumb { width: 6px; height: 180px; margin: auto 0 2px; background: #adb2b6; }
.props { flex: 385 1 0; min-height: 0; border: 1px solid #a9adb0; border-top: 6px solid #fff; border-radius: 2px; }
.props table { width: 100%; border-collapse: collapse; }
.props th { height: 26px; padding: 0 10px; background: #adb2b6; border-bottom: 1px solid #73787c; font-weight: 400; text-align: left; }
.props .key { width: 125px; border-right: 1px solid #8f9498; }
.prop-tabs { flex: none; display: flex; height: 23px; padding: 3px 0 0 7px; background: #fff; }
.prop-tabs button { height: 20px; line-height: 20px; }
.prop-tabs .on { width: 47px; margin-left: 8px; background: #adb2b6; border: 1px solid #73787c; border-bottom: 0; }

/* viewport */
.view { flex: 1; min-width: 0; display: flex; flex-direction: column; }
.toolbar { flex: none; display: flex; align-items: center; height: 36px; padding-left: 4px; background: #fff; }
.tgroup { display: flex; gap: 9px; }
.tgroup.first { gap: 8px; padding-left: 2px; }
.tgroup.tight { gap: 4px; }
.tbtn { display: flex; align-items: center; }
.chev { width: 8px; height: 6px; }
.tbtn .chev { margin: 0 3px; }
.tsep { width: 1px; height: 28px; margin: 0 5px; background: #c8c8c8; }
.tsep.full { height: 36px; margin: 0 7px; background: #a0a0a0; }
.grip { width: 2px; height: 26px; margin: 0 12px 0 5px; background: repeating-linear-gradient(#999 0 2px, #fff 2px 4px); }
.time { display: flex; align-items: center; gap: 8px; }
.time label { width: 43px; }
.combo, .spin { display: grid; align-items: center; height: 24px; }
.combo { width: 80px; }
.spin { width: 50px; }
.combo > *, .spin > * { grid-area: 1 / 1; }
.combo select, .spin input {
  appearance: none;
  width: 100%;
  height: 24px;
  padding: 0 5px;
  border: 1px solid #a0a0a0;
  border-radius: 3px;
  background: #fff;
  color: #1a1a1a;
  font: inherit;
}
.spin input { padding: 0 3px; }
.combo .chev, .arrows { justify-self: end; margin-right: 6px; pointer-events: none; }
.arrows { display: grid; gap: 6px; }
.slider { appearance: none; width: 84px; height: 24px; margin: 0; background: none; }
.slider::-webkit-slider-runnable-track { height: 4px; margin-bottom: 6px; border: 1px solid #b4b4b4; background: #f4f4f4; }
.slider::-webkit-slider-thumb { appearance: none; width: 12px; height: 13px; margin-top: -1px; border: 1px solid #b0b0b0; border-radius: 1px; background: #fafafa; }
.player { display: flex; align-items: center; }
.player button { width: 38px; display: grid; place-items: center; }
.player svg { width: 24px; height: 22px; }
.player .vid { width: 32px; }
.player .chev { width: 8px; height: 6px; }
.scene { flex: 1; min-height: 0; background: linear-gradient(#bacde5, #e8eaee); }
.plot { width: 100%; height: 100%; }
.triad text { font: 700 12px "DejaVu Sans Mono", monospace; }
.legend text { font: 12px Lato, sans-serif; fill: #111; }
.legend .unit { font-size: 16px; }

/* status bar */
.status { flex: none; height: 33px; padding: 6px 5px; border: 1px solid #a8a8a8; color: #6c6c6c; }

/* taskbar */
.taskbar { flex: none; display: flex; height: 50px; background: linear-gradient(90deg, #d3e3eb, #d8e6ed 30%, #d4e3ea 68%, #dcdfda 78%, #d4e2e8 84%, #cfe0e6); }
.start { width: 60px; display: grid; place-items: center; }
.search { width: 360px; display: flex; align-items: center; padding: 0 13px; background: #fff; border: 1px solid #c4c8ca; font-size: 19px; }
.search span { flex: 1; padding-left: 14px; text-align: left; }
.shoe { width: 48px; height: 36px; }
.watch { width: 32px; height: 36px; }
.app { width: 62px; display: grid; place-items: center; }
.run { border-bottom: 3px solid #0078d7; background-clip: padding-box; width: 52px; margin: 0 5px; padding-top: 3px; }
.run.active { width: 62px; margin: 0; background-color: #eef4f7; }
.tray { flex: 1; display: flex; align-items: center; justify-content: flex-end; }
.two { display: flex; flex-direction: column; align-items: center; }
.two span { line-height: 20px; }
.cpu { margin-right: 84px; }
.clock span { line-height: 22px; }
.clock { width: 92px; }
.weather { display: flex; align-items: center; gap: 9px; margin-right: 23px; font-size: 18px; }
.wicon { display: grid; }
.wicon > * { grid-area: 1 / 1; }
.wicon svg { width: 32px; height: 36px; }
.wicon b { justify-self: end; width: 15px; height: 15px; border-radius: 8px; background: #0063b1; color: #fff; font: 11px/15px "Open Sans", sans-serif; text-align: center; }
.tico { width: 30px; display: grid; place-items: center; }
.w16 { width: 16px; height: 10px; }
.w20 { width: 20px; height: 18px; }
.ime { font-size: 20px; }
.note { width: 52px; margin-right: 15px; display: grid; place-items: center; }
```
